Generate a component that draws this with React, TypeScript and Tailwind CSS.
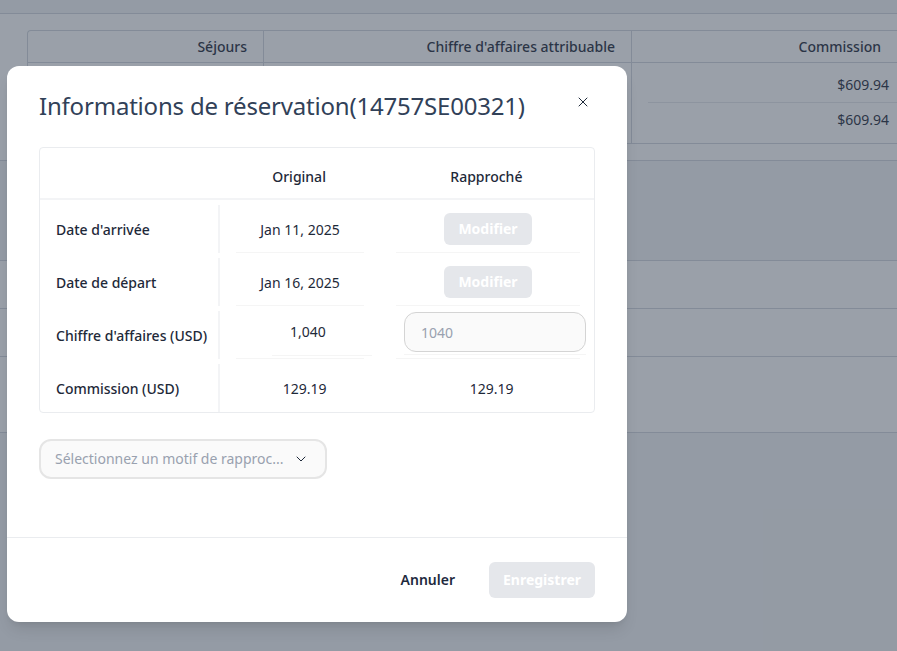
import { X, ChevronDown } from "lucide-react";

const font = { fontFamily: '"Noto Sans", Inter, sans-serif' };

function Label({ children }: { children: React.ReactNode }) {
  return (
    <div className="flex w-45 shrink-0 items-center border-r-2 border-gray-100 pt-0.5 pl-4 text-sm font-medium text-gray-800">
      {children}
    </div>
  );
}

function ModifyRow({ label, date }: { label: string; date: string }) {
  return (
    <div className="flex h-13 pt-1">
      <Label>{label}</Label>
      <div className="mx-4 flex w-32 items-center justify-center border-b border-neutral-100 pt-0.5 text-sm text-gray-800">
        {date}
      </div>
      <div className="ml-4 flex w-46 items-center justify-center border-b border-neutral-100">
        <button className="h-8 w-22 rounded-md bg-gray-200 text-sm font-bold text-white">Modifier</button>
      </div>
    </div>
  );
}

export default function App() {
  return (
    <div style={font} className="relative h-screen overflow-hidden bg-gray-100">
      <div className="h-3.5 border-b border-gray-300" />
      <div className="border-b border-gray-300 bg-white py-4 pl-6.75">
        <div className="rounded-tl border-t border-b border-l border-gray-300">
          <div className="flex h-8 border-b border-gray-300 text-sm font-medium text-gray-800">
            <div className="flex w-59 items-center justify-end border-r border-gray-300 pr-4">Séjours</div>
            <div className="flex w-92 items-center justify-end border-r border-gray-300 pr-4">Chiffre d'affaires attribuable</div>
            <div className="flex flex-1 items-center justify-end pr-4">Commission</div>
          </div>
          <div className="flex h-20 text-sm text-gray-800">
            <div className="w-59 border-r border-gray-300" />
            <div className="w-92 border-r border-gray-300" />
            <div className="flex flex-1 flex-col pl-4">
              <div className="flex h-10 items-center justify-end border-b border-gray-200 pt-1 pr-4">
                <span className="-mr-2">$609.94</span>
              </div>
              <div className="flex h-10 items-center justify-end pr-4 pb-1.5">
                <span className="-mr-2">$609.94</span>
              </div>
            </div>
          </div>
        </div>
      </div>
      <div className="h-25 border-b border-gray-300" />
      <div className="h-12 border-b border-gray-300 bg-white" />
      <div className="h-12 border-b border-gray-300 bg-white" />
      <div className="h-19 border-b border-gray-300 bg-white" />

      <div className="absolute inset-0 bg-gray-700/50" />

      <div className="absolute top-16.5 left-1.75 flex h-139 w-155 flex-col rounded-xl bg-white shadow-lg">
        <div className="flex items-start justify-between pt-6 pr-9 pb-px pl-8">
          <h2 className="text-2xl leading-8 tracking-[-0.2px] text-slate-700">Informations de réservation(14757SE00321)</h2>
          <X size={16} strokeWidth={1.5} className="mt-1 text-gray-800" />
        </div>

        <div className="flex-1 px-8 pt-6">
          <div className="rounded-sm border border-gray-200/80">
            <div className="flex h-13 items-center border-b-2 border-gray-100 pt-2 text-sm font-medium text-gray-800">
              <div className="w-45" />
              <div className="w-40 text-center">Original</div>
              <div className="w-54 text-center">Rapproché</div>
            </div>
            <div className="flex flex-col gap-px pt-px">
              <ModifyRow label="Date d'arrivée" date="Jan 11, 2025" />
              <ModifyRow label="Date de départ" date="Jan 16, 2025" />
              <div className="flex h-13 pt-1">
                <Label>Chiffre d'affaires (USD)</Label>
                <div className="mx-4 w-32 border-b border-neutral-100">
                  <div className="-mr-2 ml-2 flex h-11 items-center justify-center pb-0.5 text-sm text-gray-800">1,040</div>
                  <div className="-mr-2 ml-9 h-px bg-neutral-100" />
                </div>
                <div className="ml-4 w-46 border-b border-neutral-100">
                  <div className="-mr-1.5 ml-2 flex h-11 items-start border-b border-neutral-100">
                    <input
                      readOnly
                      placeholder="1040"
                      className="mt-px h-10 w-full rounded-xl border border-neutral-300 bg-neutral-50 px-4 text-sm placeholder:text-gray-400"
                    />
                  </div>
                </div>
              </div>
              <div className="flex h-13 pt-1 text-sm text-gray-800">
                <Label>Commission (USD)</Label>
                <div className="flex w-40 items-center justify-center pt-0.5 pl-2.5">129.19</div>
                <div className="flex w-54 items-center justify-center pt-0.5 pl-2.5">129.19</div>
              </div>
            </div>
          </div>

          <div className="mt-6.5 flex h-10 w-72 items-center justify-between rounded-xl border-2 border-neutral-200 bg-neutral-50 pr-4 pl-3.5 text-sm text-gray-400">
            <span>Sélectionnez un motif de rapproc...</span>
            <ChevronDown size={16} strokeWidth={1.5} className="text-gray-800" />
          </div>
        </div>

        <div className="flex items-center justify-end gap-5 border-t border-gray-200/80 py-6 pr-8">
          <button className="px-3.5 text-sm font-semibold text-slate-800">Annuler</button>
          <button className="h-9 w-26.5 rounded-md bg-gray-200 text-sm font-bold text-white">Enregistrer</button>
        </div>
      </div>
    </div>
  );
}
